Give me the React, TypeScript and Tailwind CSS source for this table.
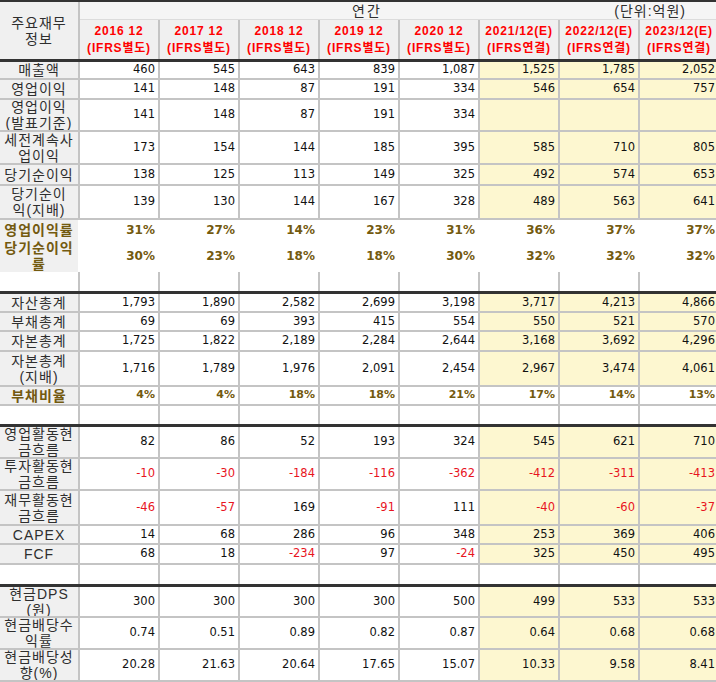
import React from 'react'

type Kind = 'data' | 'pct' | 'debt' | 'blank' | 'dark'

interface Row {
  kind: Kind
  label?: string[]
  values?: string[]
  h: string
  border?: boolean
}

const years = [
  ['2016 12', '(IFRS별도)'],
  ['2017 12', '(IFRS별도)'],
  ['2018 12', '(IFRS별도)'],
  ['2019 12', '(IFRS별도)'],
  ['2020 12', '(IFRS별도)'],
  ['2021/12(E)', '(IFRS연결)'],
  ['2022/12(E)', '(IFRS연결)'],
  ['2023/12(E)', '(IFRS연결)']
]

const rows: Row[] = [
  { kind: 'data', label: ['매출액'], values: ['460', '545', '643', '839', '1,087', '1,525', '1,785', '2,052'], h: 'h-[18px]', border: true },
  { kind: 'data', label: ['영업이익'], values: ['141', '148', '87', '191', '334', '546', '654', '757'], h: 'h-[20px]', border: true },
  { kind: 'data', label: ['영업이익', '(발표기준)'], values: ['141', '148', '87', '191', '334', '', '', ''], h: 'h-[32px]', border: true },
  { kind: 'data', label: ['세전계속사', '업이익'], values: ['173', '154', '144', '185', '395', '585', '710', '805'], h: 'h-[33px]', border: true },
  { kind: 'data', label: ['당기순이익'], values: ['138', '125', '113', '149', '325', '492', '574', '653'], h: 'h-[21px]', border: true },
  { kind: 'data', label: ['당기순이', '익(지배)'], values: ['139', '130', '144', '167', '328', '489', '563', '641'], h: 'h-[34px]', border: true },
  { kind: 'pct', label: ['영업이익률'], values: ['31%', '27%', '14%', '23%', '31%', '36%', '37%', '37%'], h: 'h-[20px]' },
  { kind: 'pct', label: ['당기순이익', '률'], values: ['30%', '23%', '18%', '18%', '30%', '32%', '32%', '32%'], h: 'h-[32px]' },
  { kind: 'blank', h: 'h-[19px]' },
  { kind: 'dark', h: 'h-[3px]' },
  { kind: 'data', label: ['자산총계'], values: ['1,793', '1,890', '2,582', '2,699', '3,198', '3,717', '4,213', '4,866'], h: 'h-[19px]', border: true },
  { kind: 'data', label: ['부채총계'], values: ['69', '69', '393', '415', '554', '550', '521', '570'], h: 'h-[19px]', border: true },
  { kind: 'data', label: ['자본총계'], values: ['1,725', '1,822', '2,189', '2,284', '2,644', '3,168', '3,692', '4,296'], h: 'h-[20px]', border: true },
  { kind: 'data', label: ['자본총계', '(지배)'], values: ['1,716', '1,789', '1,976', '2,091', '2,454', '2,967', '3,474', '4,061'], h: 'h-[35px]', border: true },
  { kind: 'debt', label: ['부채비율'], values: ['4%', '4%', '18%', '18%', '21%', '17%', '14%', '13%'], h: 'h-[19px]', border: true },
  { kind: 'blank', h: 'h-[18px]' },
  { kind: 'dark', h: 'h-[3px]' },
  { kind: 'data', label: ['영업활동현', '금흐름'], values: ['82', '86', '52', '193', '324', '545', '621', '710'], h: 'h-[32px]', border: true },
  { kind: 'data', label: ['투자활동현', '금흐름'], values: ['-10', '-30', '-184', '-116', '-362', '-412', '-311', '-413'], h: 'h-[32px]', border: true },
  { kind: 'data', label: ['재무활동현', '금흐름'], values: ['-46', '-57', '169', '-91', '111', '-40', '-60', '-37'], h: 'h-[35px]', border: true },
  { kind: 'data', label: ['CAPEX'], values: ['14', '68', '286', '96', '348', '253', '369', '406'], h: 'h-[19px]', border: true },
  { kind: 'data', label: ['FCF'], values: ['68', '18', '-234', '97', '-24', '325', '450', '495'], h: 'h-[20px]', border: true },
  { kind: 'blank', h: 'h-[19px]' },
  { kind: 'dark', h: 'h-[3px]' },
  { kind: 'data', label: ['현금DPS', '(원)'], values: ['300', '300', '300', '300', '500', '499', '533', '533'], h: 'h-[31px]', border: true },
  { kind: 'data', label: ['현금배당수', '익률'], values: ['0.74', '0.51', '0.89', '0.82', '0.87', '0.64', '0.68', '0.68'], h: 'h-[32px]', border: true },
  { kind: 'data', label: ['현금배당성', '향(%)'], values: ['20.28', '21.63', '20.64', '17.65', '15.07', '10.33', '9.58', '8.41'], h: 'h-[32px]', border: true }
]

const labelFont = "font-['Liberation_Sans','Noto_Sans_CJK_KR',sans-serif] text-[14px] leading-[16px] tracking-[1px]"
const numFont = "font-['DejaVu_Sans',sans-serif]"

function Label({ lines, olive }: { lines: string[]; olive?: boolean }) {
  return (
    <div
      className={`w-[80px] shrink-0 h-full border-r-2 border-[#c4c4c4] bg-[#f0f0f0] flex flex-col items-center justify-center overflow-hidden ${labelFont} ${
        olive ? 'text-[#735a0f] font-bold' : 'text-[#2e2e2e]'
      }`}
    >
      {lines.map((l, i) => (
        <span key={i} className="whitespace-nowrap">{l}</span>
      ))}
    </div>
  )
}

function TableRow({ row }: { row: Row }) {
  if (row.kind === 'dark') return <div className={`${row.h} bg-[#333333]`} />

  if (row.kind === 'blank') {
    return (
      <div className={`flex ${row.h}`}>
        {Array.from({ length: 9 }).map((_, i) => (
          <div key={i} className="w-[80px] shrink-0 h-full border-r-2 border-[#c4c4c4] bg-white" />
        ))}
      </div>
    )
  }

  if (row.kind === 'pct') {
    return (
      <div className={`flex ${row.h}`}>
        <div className={`w-[78px] shrink-0 h-full bg-[#f0f0f0] flex flex-col items-center justify-center ${labelFont} text-[#735a0f] font-bold`}>
          {row.label!.map((l, i) => (
            <span key={i} className="whitespace-nowrap">{l}</span>
          ))}
        </div>
        <div className="w-[2px] shrink-0 bg-white" />
        {row.values!.map((v, i) => (
          <div
            key={i}
            className={`w-[80px] shrink-0 h-full flex items-center justify-end pr-[5px] bg-white ${numFont} text-[12px] font-bold text-[#735a0f]`}
          >
            {v}
          </div>
        ))}
      </div>
    )
  }

  const debt = row.kind === 'debt'

  return (
    <div className={`flex ${row.h} ${row.border ? 'border-b-2 border-[#c4c4c4]' : ''}`}>
      <Label lines={row.label!} olive={debt} />
      {row.values!.map((v, i) => {
        const est = i >= 5
        const neg = v.startsWith('-')
        return (
          <div
            key={i}
            className={`w-[80px] shrink-0 h-full border-r-2 border-[#c4c4c4] flex items-center justify-end pr-[3px] ${numFont} ${
              debt
                ? 'bg-white text-[11px] font-bold text-[#735a0f]'
                : `${est ? 'bg-[#fdf7d0]' : 'bg-white'} text-[11.5px] ${neg ? 'text-[#e8141e]' : 'text-[#111111]'}`
            }`}
          >
            {v}
          </div>
        )
      })}
    </div>
  )
}

export default function App() {
  return (
    <div className="w-[716px] h-[682px] overflow-hidden bg-white">
      <div className="w-[720px]">
        <div className="h-[2px] bg-[#333333]" />
        <div className="flex h-[57px]">
          <div className={`w-[80px] shrink-0 h-full border-r-2 border-[#c4c4c4] bg-[#f0f0f0] flex flex-col items-center justify-center ${labelFont} text-[#2e2e2e]`}>
            <span>주요재무</span>
            <span>정보</span>
          </div>
          <div className="flex-1 flex flex-col">
            <div className={`h-[18px] flex items-center bg-[#f5f5f5] border-b border-[#dcdcdc] ${labelFont} text-[#2e2e2e]`}>
              <div className="w-[272px] shrink-0" />
              <span className="tracking-[2px]">연간</span>
              <div className="flex-1" />
              <span className="mr-[34px] tracking-[1px]">(단위:억원)</span>
            </div>
            <div className="h-[39px] flex">
              {years.map(([y, t], i) => (
                <div
                  key={i}
                  className="w-[80px] shrink-0 h-full border-r-2 border-[#c4c4c4] bg-[#f0f0f0] flex flex-col items-center justify-center gap-[3px] font-['Liberation_Sans','Noto_Sans_CJK_KR',sans-serif] text-[12px] leading-[14px] font-bold tracking-[0.8px] text-[#ff0000]"
                >
                  <span className="whitespace-nowrap">{y}</span>
                  <span className="whitespace-nowrap">{t}</span>
                </div>
              ))}
            </div>
          </div>
        </div>
        <div className="h-[3px] bg-[#333333]" />
        {rows.map((r, i) => (
          <TableRow key={i} row={r} />
        ))}
      </div>
    </div>
  )
}
